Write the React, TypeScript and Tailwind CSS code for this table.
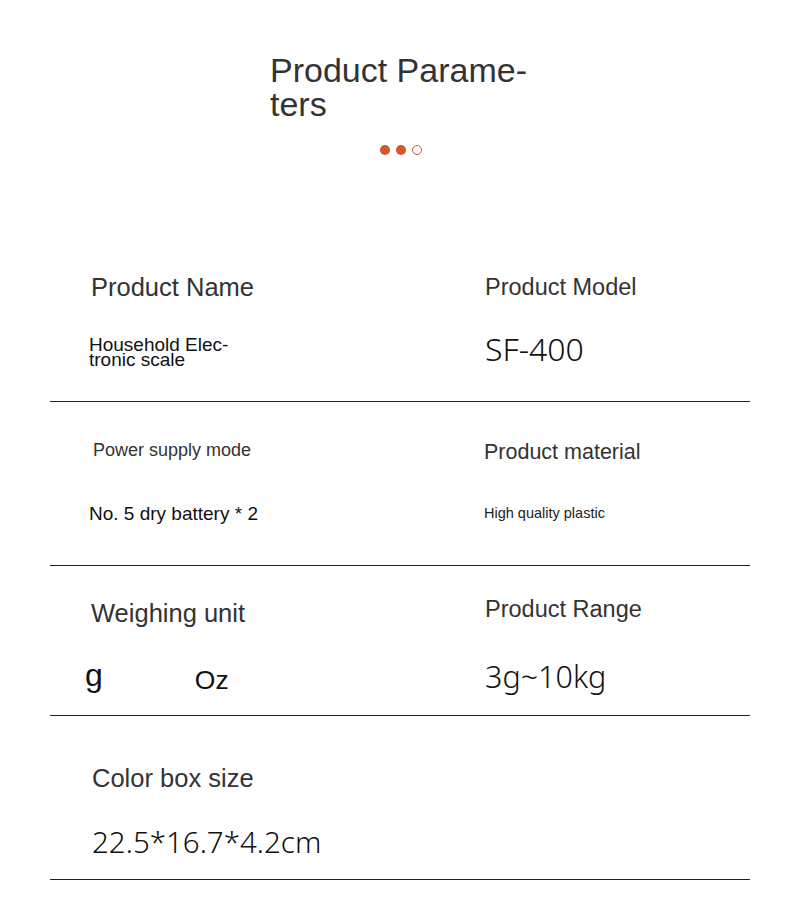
const sans = "font-['Liberation_Sans',Arial,sans-serif]";
const light = "font-['Noto_Sans',sans-serif] font-[350]";

function Dots() {
  return (
    <div className="flex justify-center gap-[6px] mt-[24px] pl-[1px]">
      <span className="block w-[10px] h-[10px] rounded-full bg-[#d2582b]" />
      <span className="block w-[10px] h-[10px] rounded-full bg-[#d2582b]" />
      <span className="block w-[10px] h-[10px] rounded-full border border-[#d2582b]" />
    </div>
  );
}

export default function App() {
  return (
    <div className={`w-[800px] h-[924px] bg-white ${sans} overflow-hidden`}>
      {/* header */}
      <div className="h-[230px] pt-[53px]">
        <h1 className="w-[260px] mx-auto text-[34px] leading-[34px] text-[#333] font-normal">
          Product Parame-
          <br />
          ters
        </h1>
        <Dots />
      </div>

      <div className="px-[50px]">
        {/* row 1 */}
        <div className="grid grid-cols-[395px_1fr] h-[172px] border-b border-[#222]">
          <div className="pl-[41px] pt-[44px]">
            <div className="text-[25.5px] leading-[26px] text-[#333]">Product Name</div>
            <div className="mt-[37px] -ml-[2px] text-[19px] leading-[15px] text-[#111]">
              Household Elec-
              <br />
              tronic scale
            </div>
          </div>
          <div className="pl-[40px] pt-[45px]">
            <div className="text-[23.5px] leading-[24px] text-[#333]">Product Model</div>
            <div className={`mt-[35px] ${light} text-[32px] leading-[30px] text-[#111]`}>SF-400</div>
          </div>
        </div>

        {/* row 2 */}
        <div className="grid grid-cols-[395px_1fr] h-[164px] border-b border-[#222]">
          <div className="pl-[40px] pt-[39px]">
            <div className="ml-[3px] text-[18px] leading-[18px] text-[#333]">Power supply mode</div>
            <div className="mt-[45px] -ml-[1px] text-[19px] leading-[19px] text-[#111]">
              No. 5 dry battery * 2
            </div>
          </div>
          <div className="pl-[39px] pt-[39px]">
            <div className="text-[21.5px] leading-[22px] text-[#333]">Product material</div>
            <div className="mt-[43px] text-[14.5px] leading-[15px] text-[#222]">High quality plastic</div>
          </div>
        </div>

        {/* row 3 */}
        <div className="grid grid-cols-[395px_1fr] h-[150px] border-b border-[#222]">
          <div className="pl-[41px] pt-[34px]">
            <div className="text-[25.5px] leading-[26px] text-[#333]">Weighing unit</div>
            <div className="mt-[33px] -ml-[6px] flex items-start text-[#111]">
              <span className="text-[32px] leading-[32px]">g</span>
              <span className="ml-[92px] mt-[8px] text-[26.5px] leading-[26.5px]">Oz</span>
            </div>
          </div>
          <div className="pl-[40px] pt-[31px]">
            <div className="text-[23.5px] leading-[24px] text-[#333]">Product Range</div>
            <div className={`mt-[41px] ${light} text-[30.5px] leading-[28px] text-[#111]`}>3g~10kg</div>
          </div>
        </div>

        {/* row 4 */}
        <div className="grid grid-cols-[395px_1fr] h-[164px] border-b border-[#222]">
          <div className="pl-[42px] pt-[49px]">
            <div className="text-[25.5px] leading-[26px] text-[#333]">Color box size</div>
            <div className={`mt-[37px] ${light} text-[29.5px] leading-[28px] text-[#111]`}>
              22.5*16.7*4.2cm
            </div>
          </div>
          <div />
        </div>
      </div>
    </div>
  );
}
